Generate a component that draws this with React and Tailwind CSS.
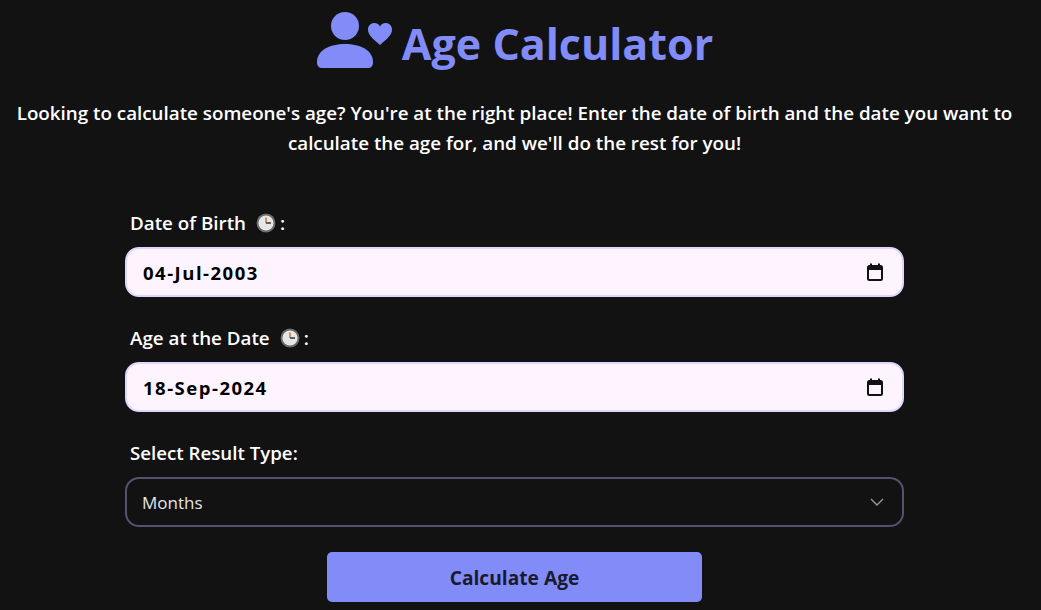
const font = { fontFamily: '"Open Sans", "Noto Sans", sans-serif' }

function ClockIcon() {
  return (
    <svg width="20" height="20" viewBox="0 0 20 20" className="shrink-0">
      <circle cx="10" cy="10" r="9.5" fill="#6b6b6b" />
      <circle cx="10" cy="10" r="7.6" fill="#e6e6e6" />
      <path d="M10 4.5V10" stroke="#c9772f" strokeWidth="1.5" />
      <path d="M10 10H15" stroke="#333" strokeWidth="1.5" />
    </svg>
  )
}

function CalendarIcon() {
  return (
    <svg width="16" height="18" viewBox="0 0 16 18" fill="none" stroke="#111" className="shrink-0">
      <rect x="1" y="3" width="14" height="14" rx="1.5" strokeWidth="2" />
      <path d="M1 5.5H15" strokeWidth="3" />
      <path d="M4 0.5V3M12 0.5V3" strokeWidth="2" />
    </svg>
  )
}

function DateField({ label, value }) {
  return (
    <div className="mb-[26px]">
      <label className="flex items-center h-[30px] pl-[5px] mb-[9px] text-[18.8px] font-semibold text-white">
        <span>{label}</span>
        <span className="ml-[10px]"><ClockIcon /></span>
        <span className="ml-[4px]">:</span>
      </label>
      <div className="flex items-center justify-between h-[50px] pl-[16px] pr-[19px] rounded-[14px] bg-[#fdf4ff] border-2 border-[#ddd6fe]">
        <span className="pt-px text-[18.5px] font-bold text-black tracking-[1.5px]">{value}</span>
        <CalendarIcon />
      </div>
    </div>
  )
}

export default function App() {
  return (
    <div className="w-full h-[610px] overflow-hidden bg-[#121212]" style={font}>
      <div className="w-[1029px]">
        <h1 className="flex items-center justify-center h-[88px] pl-px gap-[9px] text-[#818cf8] text-[43px] font-bold">
          <svg width="76" height="57" viewBox="0 0 76 57" fill="#818cf8" className="shrink-0 mb-[8px]">
            <circle cx="28" cy="14" r="14" />
            <path d="M0 50C0 38 13 32 28 32S56 38 56 50C56 54 54 56 51 56H5C2 56 0 54 0 50Z" />
            <path d="M63 33C56 27 51 23 51 17.500C51 13.500 54 11 57.500 11C60 11 62 12.500 63 14.500C64 12.500 66 11 68.500 11C72 11 75 13.500 75 17.500C75 23 70 27 63 33Z" />
          </svg>
          <span>Age Calculator</span>
        </h1>

        <p className="px-2 mt-[10px] text-center text-white text-[18.8px] leading-[30px] font-semibold">
          Looking to calculate someone's age? You're at the right place! Enter the date of birth and the date you want to calculate the age for, and we'll do the rest for you!
        </p>

        <form className="w-[779px] mx-auto mt-[50px]">
          <DateField label="Date of Birth" value="04-Jul-2003" />
          <DateField label="Age at the Date" value="18-Sep-2024" />

          <label className="flex items-center h-[30px] pl-[5px] mb-[9px] text-[18.7px] font-semibold text-white">
            Select Result Type:
          </label>
          <div className="flex items-center justify-between h-[50px] pl-[15px] pr-[18px] rounded-[14px] border-2 border-[#57506f] text-[17px] text-[#e5e5e5]">
            <span className="pt-px">Months</span>
            <svg width="14" height="8" viewBox="0 0 14 8" fill="none" stroke="#9a96a8" strokeWidth="1.4">
              <path d="M1 1L7 7L13 1" />
            </svg>
          </div>

          <div className="flex justify-center mt-[25px]">
            <button type="button" className="w-[375px] h-[50px] pt-[2px] rounded-[5px] bg-[#818cf8] text-[#1a1a2e] text-[19.2px] font-bold">
              Calculate Age
            </button>
          </div>
        </form>
      </div>
    </div>
  )
}
